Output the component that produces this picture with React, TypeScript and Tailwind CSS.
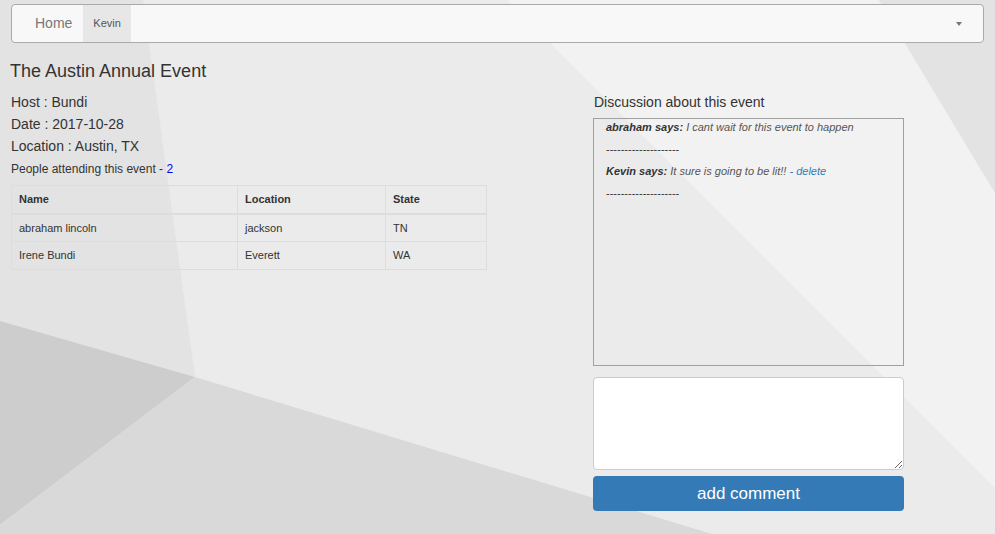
import { useState } from 'react';

const attendees = [
  { name: 'abraham lincoln', location: 'jackson', state: 'TN' },
  { name: 'Irene Bundi', location: 'Everett', state: 'WA' },
];

const comments = [
  { author: 'abraham', text: 'I cant wait for this event to happen', own: false },
  { author: 'Kevin', text: 'It sure is going to be lit!!', own: true },
];

function Backdrop() {
  return (
    <svg
      className="absolute inset-0 h-full w-full"
      viewBox="0 0 995 534"
      preserveAspectRatio="none"
    >
      <polygon points="0,0 143,0 195,377 0,321" fill="#e3e3e3" />
      <polygon points="0,321 195,377 0,525" fill="#cdcdcd" />
      <polygon points="195,377 712,534 0,534 0,525" fill="#d9d9d9" />
      <polygon points="507,0 879,0 995,193 995,488" fill="#f2f2f2" />
      <polygon points="879,0 995,0 995,193" fill="#e3e3e3" />
    </svg>
  );
}

function Navbar() {
  return (
    <nav className="mx-[11px] mt-[4px] flex h-[39px] items-stretch rounded-[4px] border border-[#aaaaaa] bg-[#f8f8f8]">
      <a className="flex items-center pl-[23px] pr-[11px] text-[14px] text-[#777777]">Home</a>
      <a className="flex items-center bg-[#e7e7e7] px-[10px] text-[11px] text-[#555555]">Kevin</a>
      <div className="flex-1" />
      <div className="flex items-center pr-[21px]">
        <span className="block h-0 w-0 border-x-[3px] border-t-[4px] border-x-transparent border-t-[#777777]" />
      </div>
    </nav>
  );
}

export default function App() {
  const [comment, setComment] = useState('');

  return (
    <div className="relative h-[534px] w-full overflow-hidden bg-[#ebebeb] font-['Liberation_Sans',Arial,sans-serif] text-[#333333]">
      <Backdrop />
      <div className="relative">
        <Navbar />

        <h2 className="ml-[10px] mt-[18px] text-[18px] leading-[20px]">The Austin Annual Event</h2>

        <div className="mt-[10px] flex">
          {/* event details + attendees */}
          <div className="ml-[11px] w-[476px]">
            <p className="text-[14px] leading-[22px]">Host : Bundi</p>
            <p className="text-[14px] leading-[22px]">Date : 2017-10-28</p>
            <p className="text-[14px] leading-[22px]">Location : Austin, TX</p>
            <p className="mt-[4px] text-[12px] leading-[16px]">
              People attending this event - <span className="text-[#0000ff]">2</span>
            </p>
            <table className="mt-[8px] w-full border-collapse border border-[#dddddd] text-[11px]">
              <thead>
                <tr className="h-[28px] border-b-2 border-[#dddddd]">
                  <th className="w-[226px] border border-[#dddddd] px-[7px] text-left font-bold">Name</th>
                  <th className="w-[148px] border border-[#dddddd] px-[7px] text-left font-bold">Location</th>
                  <th className="border border-[#dddddd] px-[7px] text-left font-bold">State</th>
                </tr>
              </thead>
              <tbody>
                {attendees.map((a) => (
                  <tr key={a.name} className="h-[28px]">
                    <td className="border border-[#dddddd] px-[7px]">{a.name}</td>
                    <td className="border border-[#dddddd] px-[7px]">{a.location}</td>
                    <td className="border border-[#dddddd] px-[7px]">{a.state}</td>
                  </tr>
                ))}
              </tbody>
            </table>
          </div>

          {/* discussion */}
          <div className="ml-[106px] w-[311px]">
            <p className="ml-[1px] mt-[1px] text-[14px] leading-[20px]">Discussion about this event</p>
            <div className="mt-[6px] h-[248px] border border-[#a0a0a0] pl-[12px] text-[11px] italic">
              {comments.map((c) => (
                <div key={c.author}>
                  <p className="mb-[6px] leading-[16px]">
                    <b className="text-[#333333]">{c.author} says:</b>{' '}
                    <span className="text-[#555555]">{c.text}</span>
                    {c.own && <a className="text-[#337ab7]"> - delete</a>}
                  </p>
                  <p className="mb-[6px] not-italic leading-[16px]">--------------------</p>
                </div>
              ))}
            </div>
            <textarea
              value={comment}
              onChange={(e) => setComment(e.target.value)}
              className="mt-[11px] block h-[93px] w-full rounded-[4px] border border-[#cccccc] bg-white"
            />
            <button className="mt-[6px] h-[35px] w-full rounded-[4px] bg-[#337ab7] text-[17px] text-white">
              add comment
            </button>
          </div>
        </div>
      </div>
    </div>
  );
}
